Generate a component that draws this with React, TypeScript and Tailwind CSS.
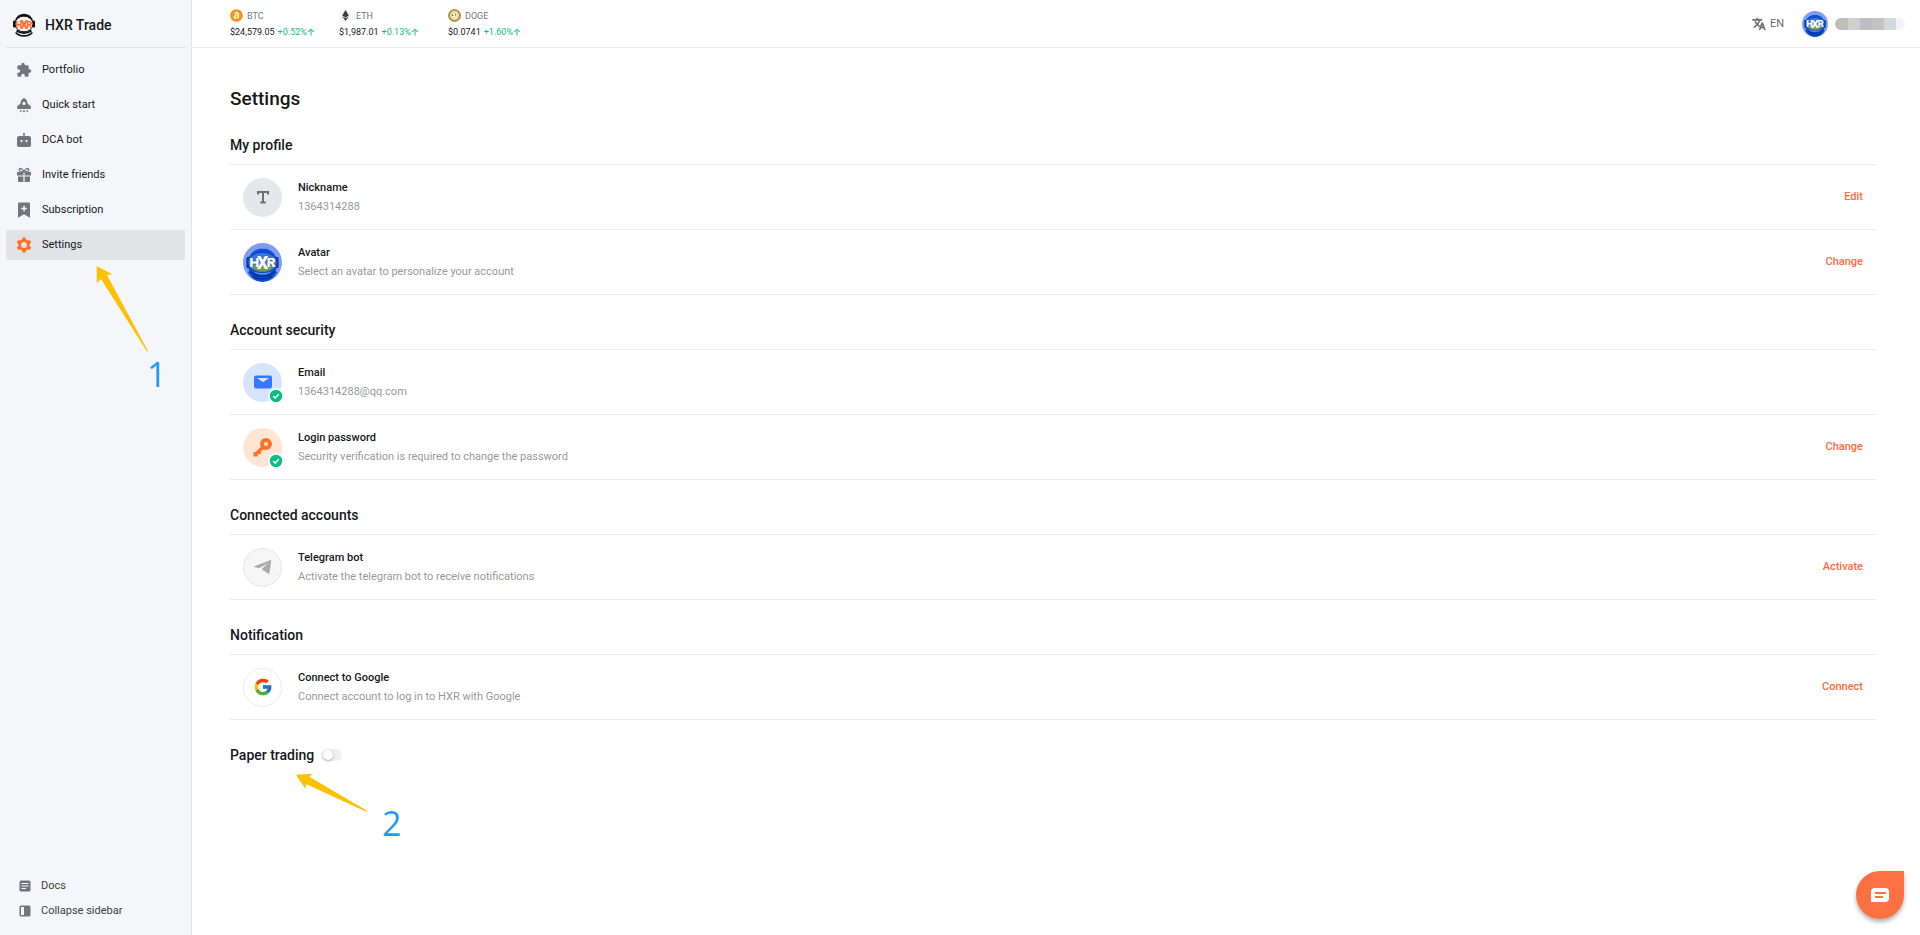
import { useState } from 'react'
import type { ReactNode } from 'react'
import clsx from 'clsx'
import { MdExtension, MdTranslate } from 'react-icons/md'
import { FaBitcoin, FaEthereum } from 'react-icons/fa'
import { FcGoogle } from 'react-icons/fc'

const BrandLogo = () => (
  <svg viewBox="0 0 24 24" className="size-6 shrink-0">
    <path d="M4 7.5C6 3 9 1.8 12 1.8s6 1.2 8 5.7" fill="none" stroke="#111" strokeWidth="2.2" />
    <rect x="1" y="7.5" width="2.6" height="7" rx="1.2" fill="#111" />
    <rect x="20.4" y="7.5" width="2.6" height="7" rx="1.2" fill="#111" />
    <ellipse cx="12" cy="11" rx="9" ry="7.8" fill="#fff4ee" stroke="#111" strokeWidth="1" />
    <g textAnchor="middle" fontWeight="700" fill="#ff6b2c" stroke="#ff6b2c" strokeWidth=".2">
      <text x="6.800" y="14.500" fontSize="9.500">H</text>
      <text x="12" y="15.500" fontSize="12">X</text>
      <text x="17.400" y="14.500" fontSize="9.500">R</text>
    </g>
    <path d="M4.500 17.500c4 3.400 11 3.400 15 0M3.600 19.500c4 4.500 12.800 4.500 16.800 0" fill="none" stroke="#111" strokeWidth="1.700" />
  </svg>
)

const Avatar = ({ className }: { className?: string }) => (
  <svg viewBox="0 0 40 40" className={clsx('shrink-0 rounded-full', className)}>
    <rect width="40" height="40" fill="#7f9df0" />
    <path d="M6 15C9 8 14 6 20 6s11 2 14 9v14H6z" fill="#0a50dc" />
    <rect x="3.5" y="14" width="5" height="12" rx="2" fill="#0838a8" />
    <rect x="31.5" y="14" width="5" height="12" rx="2" fill="#0838a8" />
    <path d="M5 30c4-2 6-2 7 0 5 3 11 3 16 0 1-2 3-2 7 0-3 6-9 10-15 10S8 36 5 30z" fill="#0a4fe0" />
    <path d="M7 29c7 7 19 7 26 0M10 34c6 4 14 4 20 0" fill="none" stroke="#062f86" strokeWidth="1.5" />
    <ellipse cx="20" cy="20" rx="15" ry="10.500" fill="#3d74cf" stroke="#0b3fb5" strokeWidth="1" />
    <path d="M8 24c7-3 17-3 24 0-6 7-18 7-24 0z" fill="#73994a" />
    <g textAnchor="middle" fontWeight="700" fill="#fff" stroke="#fff" strokeWidth=".2">
      <text x="11.500" y="25" fontSize="14">H</text>
      <text x="20" y="26.500" fontSize="18">X</text>
      <text x="28.800" y="25" fontSize="14">R</text>
    </g>
  </svg>
)

const RocketIcon = () => (
  <svg viewBox="0 0 16 16" fill="currentColor" className="size-4">
    <path fillRule="evenodd" d="M8 1C5.500 2 4.500 4.200 4.300 7 2 7.700 1 9 1 10.500c0 .9.500 1.500 1.400 1.500h11.200c.9 0 1.400-.6 1.400-1.500C15 9 14 7.700 11.700 7 11.500 4.200 10.500 2 8 1zm0 3.700a1.700 1.700 0 110 3.400 1.700 1.700 0 010-3.400z" />
    <path d="M4 13.300h1.600v1.400H4zM7.200 13.300h1.600v2H7.200zM10.400 13.300H12v1.400h-1.600z" />
  </svg>
)

const BotIcon = () => (
  <svg viewBox="0 0 16 16" fill="currentColor" className="size-4">
    <path fillRule="evenodd" d="M8 1a1.200 1.200 0 01.6 2.200V4H13a2 2 0 012 2v7a2 2 0 01-2 2H3a2 2 0 01-2-2V6a2 2 0 012-2h4.400v-.8A1.200 1.200 0 018 1zM4.600 8v2h1.800V8zm5 0v2h1.800V8z" />
  </svg>
)

const GiftIcon = () => (
  <svg viewBox="0 0 16 16" fill="currentColor" className="size-4">
    <path d="M1 5h6.400v3.500H1zM8.600 5H15v3.500H8.600zM2 9.500h5.400V15H3a1 1 0 01-1-1zM8.600 9.500H14V14a1 1 0 01-1 1H8.600z" />
    <path d="M8 5C6.500 1.500 3.500.5 3.200 2.600 3 4.500 5 5 8 5zm0 0c1.500-3.500 4.500-4.500 4.800-2.400C13 4.500 11 5 8 5z" fill="none" stroke="currentColor" strokeWidth="1.300" />
  </svg>
)

const SubscriptionIcon = () => (
  <svg viewBox="0 0 16 16" fill="currentColor" className="size-4">
    <path fillRule="evenodd" d="M3.200.5h9.600c.7 0 1.200.5 1.200 1.200v14L8 12.300l-6 3.400v-14C2 1 2.500.5 3.200.5zM7.300 3.800v2H5.200v1.500h2.100v2h1.500v-2h2V5.800h-2v-2z" />
  </svg>
)

const GearIcon = () => (
  <svg viewBox="0 0 16 16" className="size-4 text-[#ff6f26]">
    <circle cx="8" cy="8" r="4.300" fill="none" stroke="currentColor" strokeWidth="2.800" />
    <path d="M6.500.5h3l.6 3H5.900zM6.500 15.500h3l.6-3H5.900zM.8 5.500l1.500-2.600 2.900 1-2.100 3.600zM15.200 10.500l-1.500 2.600-2.900-1 2.100-3.600zM.8 10.500l1.500 2.600 2.900-1-2.100-3.600zM15.200 5.500l-1.500-2.600-2.900 1 2.100 3.600z" fill="currentColor" />
  </svg>
)

const DocsIcon = () => (
  <svg viewBox="0 0 12 12" className="size-3">
    <rect x=".5" y=".5" width="11" height="11" rx="1.500" fill="currentColor" />
    <path d="M2.500 3.500h7M2.500 6h7M2.500 8.500h4.500" stroke="#f4f6fa" />
  </svg>
)

const CollapseIcon = () => (
  <svg viewBox="0 0 12 12" className="size-3">
    <rect x=".5" y=".5" width="11" height="11" rx="1.500" fill="currentColor" />
    <path d="M2 2h3v8H2z" fill="#f4f6fa" />
  </svg>
)

const DogeIcon = () => (
  <svg viewBox="0 0 14 14" className="size-[13px]">
    <circle cx="7" cy="7" r="6" fill="#e9dfbd" stroke="#b2933a" strokeWidth="2" />
    <path d="M3.500 4l1.200-1 1 1h2.800l1-1 1 1.500v4C10 10.500 8.500 11 7 11S3.800 10 3.500 8z" fill="#f4eed8" stroke="#cbb778" strokeWidth=".6" />
    <path d="M4.300 6h1.200v1.600H4.300zM7.500 5.600h1.200V7H7.500z" fill="#6d5a2a" />
  </svg>
)

const KeyIcon = () => (
  <svg viewBox="0 0 20 20" className="size-5 text-[#ff6f26]">
    <circle cx="13" cy="7" r="4" fill="none" stroke="currentColor" strokeWidth="3.800" />
    <path d="M10 10l-7.500 7.500" stroke="currentColor" strokeWidth="3.400" />
    <path d="M5.500 14.500l2.300 2.300M1.500 15.200V18.500h3.200" fill="none" stroke="currentColor" strokeWidth="2" />
  </svg>
)

const MailIcon = () => (
  <svg viewBox="0 0 20 20" className="size-5">
    <rect x="1" y="3.500" width="18" height="13" rx="2" fill="#3478ff" />
    <path d="M4 6h12l-6 4.200z" fill="#d6e4ff" />
  </svg>
)

const TelegramIcon = () => (
  <svg viewBox="0 0 18 16" fill="#aaa" className="h-4 w-[18px]">
    <path d="M.5 7.300L16 1.200c.8-.3 1.300 0 1.200.9l-1.700 11.700c-.1.900-.8 1.100-1.500.6L7.600 10.200l6.200-5.700L5.600 9 .6 8.200c-.4-.2-.4-.7-.1-.9z" />
  </svg>
)

const TextIcon = () => (
  <svg viewBox="0 0 14 14" className="size-3.5 text-[#6e7076]">
    <path d="M2 4.500V2h10v2.500M7 2v10.500M4.300 12.500h5.400" fill="none" stroke="currentColor" strokeWidth="2" />
  </svg>
)

const Verified = () => (
  <svg viewBox="0 0 16 16" className="absolute -right-0.5 -bottom-0.5 size-4">
    <circle cx="8" cy="8" r="8" fill="#fff" />
    <circle cx="8" cy="8" r="6.200" fill="#06bd84" />
    <path d="M5.200 8l2 2 3.600-3.700" fill="none" stroke="#fff" strokeWidth="1.600" />
  </svg>
)

const navItems = [
  { label: 'Portfolio', icon: <MdExtension className="size-4" /> },
  { label: 'Quick start', icon: <RocketIcon /> },
  { label: 'DCA bot', icon: <BotIcon /> },
  { label: 'Invite friends', icon: <GiftIcon /> },
  { label: 'Subscription', icon: <SubscriptionIcon /> },
  { label: 'Settings', icon: <GearIcon />, active: true },
]

const tickers = [
  { symbol: 'BTC', price: '$24,579.05', change: '+0.52%', icon: <FaBitcoin className="size-[13px] text-[#f7931a]" /> },
  { symbol: 'ETH', price: '$1,987.01', change: '+0.13%', icon: <FaEthereum className="size-[13px] rounded-full bg-[#f3f4f8] p-px text-[#3c3c3d]" /> },
  { symbol: 'DOGE', price: '$0.0741', change: '+1.60%', icon: <DogeIcon /> },
]

type RowProps = {
  icon: ReactNode
  circle?: string
  title: string
  text: string
  action?: string
  verified?: boolean
}

function Row({ icon, circle, title, text, action, verified }: RowProps) {
  return (
    <li className="flex h-[65px] items-center gap-4 border-b border-[#ebebeb] px-[13px]">
      <div className={clsx('relative flex size-[39px] shrink-0 items-center justify-center rounded-full', circle)}>
        {icon}
        {verified && <Verified />}
      </div>
      <div className="flex-1 text-[11px] leading-[19px]">
        <h3 className="font-medium">{title}</h3>
        <p className="text-[#999]">{text}</p>
      </div>
      {action && (
        <button type="button" className="text-[11px] leading-[18px] font-medium text-[#ff6a40]">
          {action}
        </button>
      )}
    </li>
  )
}

function Section({ title, children }: { title: string; children: ReactNode }) {
  return (
    <section className="pt-[25px]">
      <h2 className="mb-[9px] text-sm leading-5 font-medium">{title}</h2>
      <ul className="border-t border-[#ebebeb]">{children}</ul>
    </section>
  )
}

export default function App() {
  const [paper, setPaper] = useState(false)

  return (
    <div className="relative flex min-h-screen bg-white font-[Roboto,sans-serif] text-[#16181c]">
      <aside className="flex w-48 shrink-0 flex-col border-r border-[#e3e4e8] bg-[#f4f6fa] px-1.5">
        <div className="flex h-12 items-center gap-[9px] border-b border-[#e3e4e8] px-1.5 pt-0.5">
          <BrandLogo />
          <span className="text-sm font-medium">HXR Trade</span>
        </div>
        <nav className="flex flex-col gap-[5px] pt-[7px] text-[11px] leading-4">
          {navItems.map((item) => (
            <a
              key={item.label}
              href="#"
              className={clsx('flex h-[30px] items-center gap-2.5 rounded-xs px-2.5', item.active && 'bg-[#e2e3e7]')}
            >
              <span className="text-[#73757b]">{item.icon}</span>
              {item.label}
            </a>
          ))}
        </nav>
        <div className="mt-auto flex flex-col items-start pb-3 pl-[13px] text-[11px] leading-[25px] text-[#3c3e43]">
          <a href="#" className="flex items-center gap-2.5">
            <span className="text-[#73757b]"><DocsIcon /></span>
            Docs
          </a>
          <button type="button" className="flex items-center gap-2.5">
            <span className="text-[#73757b]"><CollapseIcon /></span>
            Collapse sidebar
          </button>
        </div>
      </aside>

      <div className="flex min-w-0 flex-1 flex-col">
        <header className="flex h-12 items-center justify-between border-b border-[#ebebeb] pr-[15px] pl-[38px]">
          <div className="flex">
            {tickers.map((t) => (
              <div key={t.symbol} className="w-[109px] text-[9px] leading-4">
                <div className="flex items-center gap-1 text-[#777]">
                  {t.icon}
                  {t.symbol}
                </div>
                <div className="flex items-center gap-[3px]">
                  {t.price}
                  <span className="flex items-center text-[#0fbd85]">
                    {t.change}
                    <svg viewBox="0 0 8 8" className="size-2">
                      <path d="M4 7.500V1.500M1 4l3-2.700L7 4" fill="none" stroke="currentColor" />
                    </svg>
                  </span>
                </div>
              </div>
            ))}
          </div>
          <div className="flex items-center">
            <button type="button" className="flex items-center gap-1 text-[11px] leading-4 text-[#6b6b6b]">
              <MdTranslate className="size-3.5 [&>path:last-child]:stroke-1" />
              EN
            </button>
            <Avatar className="mr-[7px] ml-[18px] size-[26px]" />
            <div className="flex h-3 overflow-hidden rounded-full">
              <span className="w-[13px] bg-[#bebfba]" />
              <span className="w-3 bg-[#cfd0cb]" />
              <span className="w-3 bg-[#bfbdc4]" />
              <span className="w-3 bg-[#c5c3c0]" />
              <span className="w-3 bg-[#d2dade]" />
              <span className="w-[9px] bg-[#f4f4f4]" />
            </div>
          </div>
        </header>

        <main className="pt-10 pr-11 pl-[38px]">
          <h1 className="text-[19px] leading-[22px] font-medium">Settings</h1>

          <Section title="My profile">
            <Row icon={<TextIcon />} circle="bg-[#e5e7eb]" title="Nickname" text="1364314288" action="Edit" />
            <Row icon={<Avatar className="size-[39px]" />} title="Avatar" text="Select an avatar to personalize your account" action="Change" />
          </Section>

          <Section title="Account security">
            <Row icon={<MailIcon />} circle="bg-[#d6e4ff]" title="Email" text="1364314288@qq.com" verified />
            <Row
              icon={<KeyIcon />}
              circle="bg-[#ffe5d3]"
              title="Login password"
              text="Security verification is required to change the password"
              action="Change"
              verified
            />
          </Section>

          <Section title="Connected accounts">
            <Row
              icon={<TelegramIcon />}
              circle="border border-[#e6e6e6] bg-[#f6f6f6]"
              title="Telegram bot"
              text="Activate the telegram bot to receive notifications"
              action="Activate"
            />
          </Section>

          <Section title="Notification">
            <Row
              icon={<FcGoogle className="size-5" />}
              circle="border border-[#ebebeb]"
              title="Connect to Google"
              text="Connect account to log in to HXR with Google"
              action="Connect"
            />
          </Section>

          <label className="flex w-fit items-center gap-2 pt-[25px] text-sm leading-5 font-medium">
            Paper trading
            <input
              type="checkbox"
              role="switch"
              checked={paper}
              onChange={(e) => setPaper(e.target.checked)}
              className="h-3 w-5 appearance-none rounded-full bg-[#f0f0f0] p-px before:block before:size-2.5 before:rounded-full before:bg-white before:shadow-[0_1px_3px_rgba(0,0,0,0.3)] checked:bg-[#ff6f26] checked:before:ml-2"
            />
          </label>
        </main>
      </div>

      {/* Step markers */}
      <svg viewBox="0 0 52 86" className="absolute top-[266px] left-24 h-[86px] w-[52px]">
        <path d="M.7 0l15.500 8.300-5.300.7L52 85l-1 .5L5 13l-4.300 4z" fill="#ffc000" />
      </svg>
      <span className="absolute top-[350px] left-[147px] font-['Open_Sans',sans-serif] text-[34px] leading-[48px] text-[#1e9bff]">1</span>
      <svg viewBox="0 0 72 40" className="absolute top-[773px] left-[296px] h-10 w-[72px]">
        <path d="M0 1.700l16.700-1-3.400 3L71.500 38l-.7 1L10 11l-.7 4.700z" fill="#ffc000" />
      </svg>
      <span className="absolute top-[799px] left-[382px] font-['Open_Sans',sans-serif] text-[34px] leading-[48px] text-[#1e9bff]">2</span>

      <button
        type="button"
        aria-label="Open chat"
        className="fixed right-4 bottom-4 flex size-12 items-center justify-center rounded-full rounded-tr-sm bg-[#ff7043] shadow-[0_3px_4px_rgba(0,0,0,0.3)]"
      >
        <svg viewBox="0 0 20 16" className="h-4 w-5">
          <path d="M5 1h10c3 0 4 1.500 4 4v6c0 2.500-1 4-4 4H1V5c0-2.500 1-4 4-4z" fill="#fff" />
          <path d="M5 6h11M5 10h8" stroke="#ff7043" strokeWidth="2" />
        </svg>
      </button>
    </div>
  )
}
